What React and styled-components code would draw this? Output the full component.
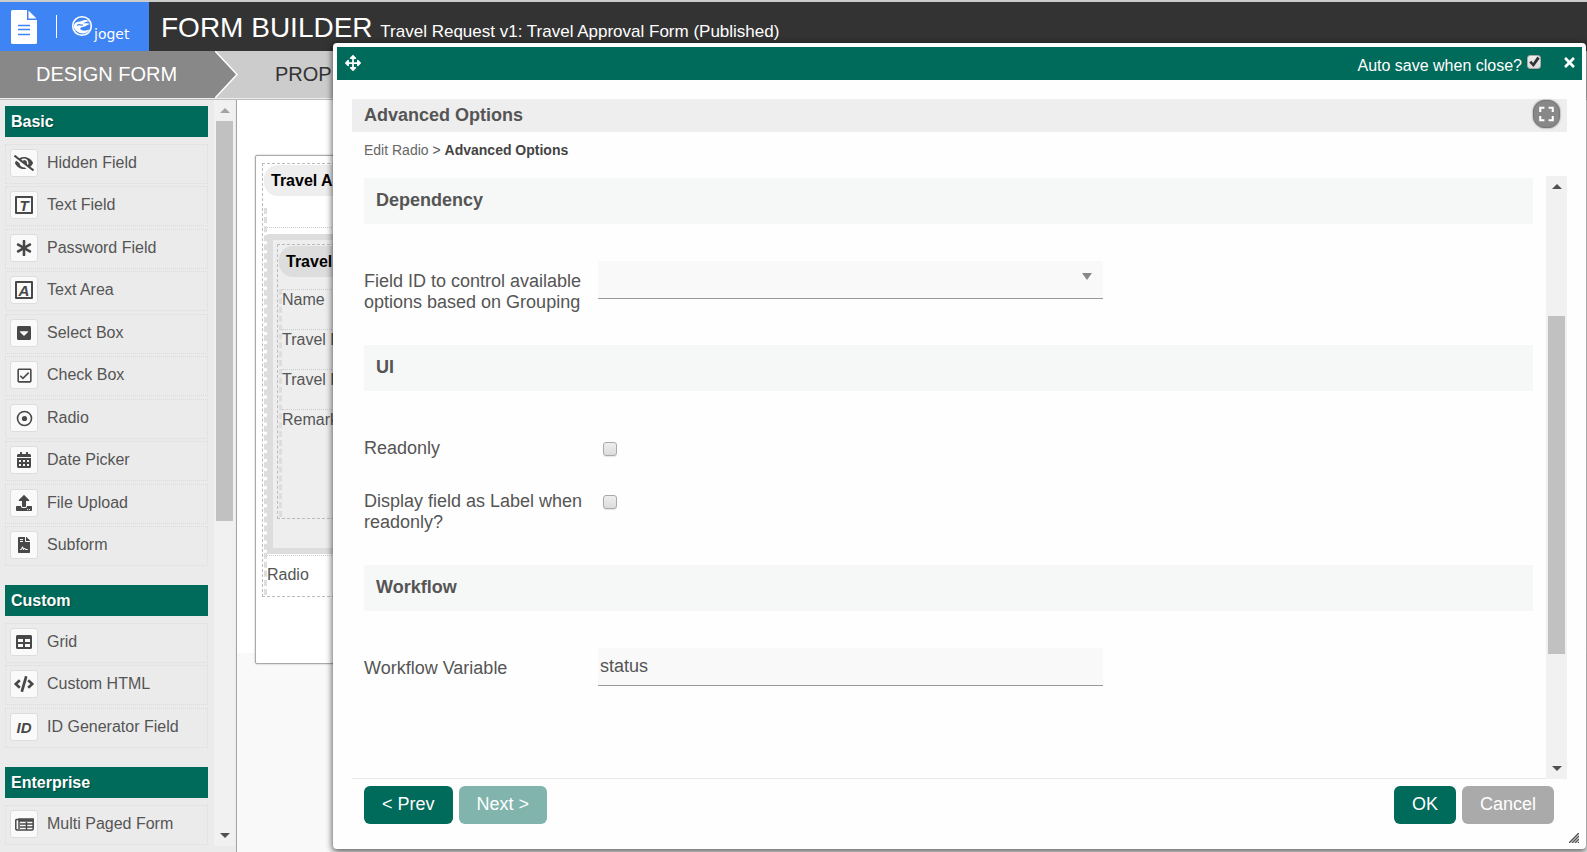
import React from "react";
import styled, { createGlobalStyle } from "styled-components";
import {
  FaArrowsAlt,
  FaAsterisk,
  FaCalendarAlt,
  FaCaretSquareDown,
  FaCode,
  FaEyeSlash,
  FaFileContract,
  FaTable,
  FaTimes,
  FaUpload,
} from "react-icons/fa";
import { MdFullscreen, MdOutlineCheckBox } from "react-icons/md";

const GREEN = "#006a5b";

const GlobalStyle = createGlobalStyle`
  * {
    box-sizing: border-box;
  }

  body {
    margin: 0;
    overflow: hidden;
    background: #f9f9f9;
    color: #555;
    font-family: "Liberation Sans", Arial, sans-serif;
    font-size: 16px;
  }

  button,
  input,
  select {
    font-family: inherit;
  }
`;

const Page = styled.div`
  position: relative;
  display: flex;
  flex-direction: column;
  height: 100vh;
  border-top: 2px solid #ccc;
`;

/* ---------- header ---------- */

const Header = styled.header`
  display: flex;
  flex: none;
  height: 49px;
  background: #333;
  color: #fff;
`;

const Brand = styled.a`
  display: flex;
  align-items: center;
  width: 149px;
  padding-left: 11px;
  background: #3f84f5;
  color: #fff;
  text-decoration: none;
`;

const BrandDivider = styled.span`
  width: 1px;
  height: 23px;
  margin: 0 14px 0 19px;
  background: #fff;
`;

const BrandName = styled.span`
  align-self: flex-end;
  padding: 0 0 9px 1px;
  font: 14px/16px "DejaVu Sans", sans-serif;
`;

const Title = styled.h1`
  margin: 0;
  padding: 9px 0 0 12px;
  font-size: 28px;
  font-weight: normal;
  line-height: 34px;
  white-space: nowrap;

  small {
    font-size: 17px;
  }
`;

const Steps = styled.nav`
  display: flex;
  flex: none;
  height: 49px;
  background: #ccc;
  border-bottom: 1px solid #bbb;
  box-shadow: inset 0 -1px 0 #eee;
`;

const Step = styled.a`
  padding: 12px 0 0 36px;
  width: ${(props) => (props.$active ? "215px" : "auto")};
  margin-bottom: 1px;
  background: ${(props) => (props.$active ? "#888" : "transparent")};
  color: ${(props) => (props.$active ? "#fff" : "#333")};
  font-size: 20px;
  line-height: 23px;
  text-decoration: none;
`;

const StepArrow = styled.svg`
  width: 24px;
  height: 47px;
`;

/* ---------- palette ---------- */

const Workspace = styled.div`
  display: flex;
  flex: 1;
  min-height: 0;
`;

const Sidebar = styled.aside`
  display: flex;
  flex: none;
  width: 237px;
  padding-right: 1px;
  background: #ebebeb;
  border-right: 1px solid #a5a5a5;
  overflow: hidden;
`;

const PaletteScroll = styled.div`
  flex: 1;
  padding: 6px 6px 0 5px;
  overflow: hidden;
`;

const Category = styled.section`
  margin-bottom: 19px;
`;

const CategoryTitle = styled.h2`
  margin: 0 0 7px;
  padding: 6px;
  background: ${GREEN};
  color: #fff;
  font-size: 16px;
  line-height: 19px;
  text-shadow: 1px 1px 1px rgba(0, 0, 0, 0.3);
`;

const PaletteList = styled.ul`
  margin: 0;
  padding: 0;
  list-style: none;
`;

const PaletteRow = styled.li`
  display: flex;
  gap: 9px;
  height: 40px;
  margin-bottom: 2px;
  padding: 4px;
  border: 1px dotted #dcdcdc;
  line-height: 27px;
  cursor: move;

  &:nth-child(even) {
    margin-bottom: 3px;
  }

  &:last-child {
    margin-bottom: 0;
  }
`;

const IconBox = styled.span`
  display: flex;
  flex: none;
  align-items: center;
  justify-content: center;
  width: 28px;
  height: 28px;
  background: #fafafa;
  border: 1px solid #ddd;
  border-radius: 3px;
  color: #484848;
  font-size: 16px;
`;

const LetterBox = styled.b`
  width: 18px;
  height: 18px;
  border: 2px solid #484848;
  border-radius: 1px;
  font-size: 15px;
  font-style: italic;
  line-height: 15px;
  text-align: center;
`;

const Letters = styled.b`
  font-size: 15px;
  font-style: italic;
`;

/* ---------- scroll bar ---------- */

const Track = styled.div`
  display: flex;
  flex: none;
  flex-direction: column;
  align-items: center;
  width: 21px;
  margin-bottom: ${(props) => props.$end || 0}px;
  background: #f1f1f1;
`;

const Thumb = styled.div`
  flex: ${(props) => props.$size};
  width: 17px;
  background: #c1c1c1;
`;

const Gap = styled.div`
  flex: ${(props) => props.$size};
`;

const Arrow = styled.span`
  display: flex;
  align-items: center;
  justify-content: center;
  height: 21px;

  &::before {
    content: "";
    border: 5px solid transparent;
    border-width: ${(props) => (props.$up ? "0 5px 5px" : "5px 5px 0")};
    border-bottom-color: ${(props) => (props.$dim ? "#a3a3a3" : "#505050")};
    border-top-color: #505050;
  }
`;

/* ---------- form canvas ---------- */

const Canvas = styled.main`
  flex: 1;
  padding: 55px 18px 0;
  background: linear-gradient(#fff 553px, #f9f9f9 553px);
`;

const FormCard = styled.div`
  height: 509px;
  padding: 7px 6px;
  background: #fff;
  border: 1px solid #aaa;
  border-radius: 2px;
  box-shadow: 0 0 2px rgba(0, 0, 0, 0.3);
`;

const FormSection = styled.section`
  padding: 1px;
  border: 1px dashed #bbb;
`;

const SectionTitle = styled.h3`
  margin: 0 0 12px;
  padding: 6px 7px;
  background: ${(props) => props.$fill};
  border-radius: 14px;
  color: #000;
  font-size: 16px;
  line-height: 19px;
`;

const Column = styled.div`
  padding-top: ${(props) => props.$top || 0}px;
  border-left: 3px dashed #ddd;
`;

const Subform = styled.div`
  height: 320px;
  margin-top: 6px;
  padding: 4px;
  background: #eee;
  border: 6px solid #ddd;
`;

const CanvasField = styled.div`
  height: ${(props) => props.$height}px;
  padding-top: ${(props) => props.$top || 0}px;
  border-top: 1px dotted #ccc;
  line-height: 20px;
  white-space: nowrap;
`;

/* ---------- dialog ---------- */

const Dialog = styled.div`
  position: absolute;
  top: 41px;
  right: 1px;
  bottom: 3px;
  left: 333px;
  display: flex;
  flex-direction: column;
  padding: 4px;
  background: #fefefe;
  border-radius: 4px;
  box-shadow: 0 2px 6px 1px rgba(0, 0, 0, 0.6);
`;

const DialogBar = styled.div`
  display: flex;
  align-items: flex-start;
  height: 33px;
  padding: 8px 5px 0 8px;
  background: ${GREEN};
  color: #fff;
`;

const AutoSave = styled.label`
  display: flex;
  gap: 5px;
  margin-left: auto;
  line-height: 22px;
`;

const CheckBox = styled.input`
  appearance: none;
  flex: none;
  width: 14px;
  height: 14px;
  margin: 0;
  background: linear-gradient(#eee, #dcdcdc);
  border: 1px solid #aaa;
  border-radius: 3px;
  box-shadow: 0 1px 1px rgba(0, 0, 0, 0.1);

  &:checked::before {
    content: "";
    display: block;
    height: 12px;
    background: #333;
    clip-path: polygon(10% 55%, 28% 40%, 42% 58%, 78% 5%, 98% 20%, 46% 92%);
  }
`;

const IconButton = styled.button`
  display: flex;
  padding: 0;
  background: none;
  border: 0;
  color: #fff;
  font-size: ${(props) => props.$size}px;
`;

const CloseButton = styled(IconButton)`
  margin-left: 21px;
`;

const Editor = styled.div`
  display: flex;
  flex: 1;
  flex-direction: column;
  min-height: 0;
  padding: 19px 15px 0;
`;

const EditorTitle = styled.div`
  display: flex;
  align-items: center;
  justify-content: space-between;
  height: 33px;
  padding: 0 7px 0 12px;
  background: #eee;

  h2 {
    margin: 0;
    font-size: 18px;
    line-height: 21px;
  }
`;

const RoundButton = styled(IconButton)`
  align-items: center;
  justify-content: center;
  width: 27px;
  height: 28px;
  margin-bottom: 4px;
  background: #888;
  border: 1px solid #777;
  border-radius: 12px;
  box-shadow: 0 0 2px #666;
`;

const Crumbs = styled.nav`
  padding: 10px 12px 18px;
  font-size: 14px;
  line-height: 16px;

  a {
    color: #666;
    text-decoration: none;
  }

  b {
    color: #444;
  }
`;

const EditorScroll = styled.div`
  display: flex;
  flex: 1;
  min-height: 0;
`;

const Properties = styled.form`
  flex: 1;
  padding: 2px 13px 0 12px;
  border-bottom: 1px solid #eaeaea;
  overflow: hidden;
`;

const Group = styled.section`
  margin-bottom: 32px;
`;

const GroupTitle = styled.h3`
  margin: 0 0 37px;
  padding: 12px 12px 13px;
  background: #f6f8f7;
  font-size: 18px;
  line-height: 21px;
`;

const PropertyRow = styled.div`
  display: grid;
  grid-template-columns: 234px 1fr;
  align-items: start;
  margin-bottom: 22px;
`;

const PropertyLabel = styled.label`
  padding: 10px 12px 0 0;
  font-size: 18px;
  line-height: 21px;
`;

const PropertyCheck = styled(CheckBox)`
  margin: 14px 5px 0;
`;

const TextInput = styled.input`
  width: 54%;
  height: 38px;
  padding: 0 2px;
  background: #f9f9f9;
  border: 0;
  border-bottom: 1px solid #999;
  border-radius: 0;
  color: #555;
  font-size: 18px;
`;

const SelectWrap = styled.div`
  position: relative;
  width: 54%;

  &::after {
    content: "";
    position: absolute;
    top: 12px;
    right: 11px;
    border: 5px solid transparent;
    border-top: 7px solid #888;
    border-bottom: 0;
  }
`;

const Select = styled(TextInput)`
  appearance: none;
  display: block;
  width: 100%;
`;

const Footer = styled.footer`
  display: flex;
  gap: 6px;
  padding: 7px 13px 21px 12px;
`;

const Button = styled.button`
  height: 38px;
  padding: 0 18px 1px;
  background: ${(props) => (props.$muted ? "#aaa" : GREEN)};
  border: 0;
  border-radius: 6px;
  color: #fff;
  font-size: 18px;

  &:disabled {
    background: #80b4ad;
  }
`;

const Spacer = styled.span`
  flex: 1;
`;

const ResizeGrip = styled.svg`
  position: absolute;
  right: 7px;
  bottom: 6px;
`;

const DocumentLogo = () => (
  <svg width="26" height="34" viewBox="0 0 26 34" fill="#fff">
    <path d="M1.500 0H16V10H26V32.500Q26 34 24.500 34H1.500Q0 34 0 32.500V1.500Q0 0 1.500 0Z" />
    <path d="M17.500 0.500L25.500 8.500H17.500Z" />
    <path d="M7 15.500h12M7 19.500h12M7 24.500h12" stroke="#3f84f5" strokeWidth="1.500" />
  </svg>
);

const SwirlLogo = () => (
  <svg width="22" height="24" viewBox="0 0 22 24" fill="none">
    <circle cx="11" cy="11" r="9.300" stroke="#fff" strokeWidth="1.600" />
    <path
      fill="#fff"
      d="M3 10C4 7 7 6.500 9.500 6.500C13 4.500 16 4.500 18 6.500C15.500 6.500 13.500 7 12.500 8.500C15 8 17.500 8 19.500 9C16.500 9.500 15 11.500 11.500 12C9 12.500 8.500 14 10.500 15C13 16.200 16 15.500 18.500 14.500C16 19 10 19.500 6 16.500C3.500 15 2.500 13 3 10Z"
    />
    <path d="M6 10.500C8.500 8.500 9.500 10.500 12 10" stroke="#3f84f5" strokeWidth="1.200" />
  </svg>
);

const RadioIcon = () => (
  <svg width="17" height="17" viewBox="0 0 17 17">
    <circle cx="8.500" cy="8.500" r="7" fill="none" stroke="#484848" strokeWidth="1.600" />
    <circle cx="8.500" cy="8.500" r="2.600" fill="#484848" />
  </svg>
);

const PagesIcon = () => (
  <svg width="19" height="13" viewBox="0 0 19 13" fill="none" stroke="#484848">
    <path d="M4 1.500H1.500Q0.800 1.500 0.800 2.200V11Q1 12 2.500 12H17Q18.200 12 18.200 10.800V1H4V11" strokeWidth="1.500" />
    <path d="M4 2.500H18" strokeWidth="2.500" />
    <path d="M5 6H18M5 9H18M11.500 4V12" strokeWidth="1.500" />
  </svg>
);

const palette = [
  {
    title: "Basic",
    items: [
      ["Hidden Field", <FaEyeSlash size={20} />],
      ["Text Field", <LetterBox>T</LetterBox>],
      ["Password Field", <FaAsterisk />],
      ["Text Area", <LetterBox>A</LetterBox>],
      ["Select Box", <FaCaretSquareDown />],
      ["Check Box", <MdOutlineCheckBox size={19} />],
      ["Radio", <RadioIcon />],
      ["Date Picker", <FaCalendarAlt />],
      ["File Upload", <FaUpload />],
      ["Subform", <FaFileContract />],
    ],
  },
  {
    title: "Custom",
    items: [
      ["Grid", <FaTable />],
      ["Custom HTML", <FaCode size={20} />],
      ["ID Generator Field", <Letters>ID</Letters>],
    ],
  },
  {
    title: "Enterprise",
    items: [["Multi Paged Form", <PagesIcon />]],
  },
];

const Palette = () => (
  <Sidebar>
    <PaletteScroll>
      {palette.map((category) => (
        <Category key={category.title}>
          <CategoryTitle>{category.title}</CategoryTitle>
          <PaletteList>
            {category.items.map(([label, icon]) => (
              <PaletteRow key={label}>
                <IconBox>{icon}</IconBox>
                {label}
              </PaletteRow>
            ))}
          </PaletteList>
        </Category>
      ))}
    </PaletteScroll>
    <Track $end={6}>
      <Arrow $up $dim />
      <Thumb $size={400} />
      <Gap $size={304} />
      <Arrow />
    </Track>
  </Sidebar>
);

const FormCanvas = () => (
  <Canvas>
    <FormCard>
      <FormSection>
        <SectionTitle $fill="#eee">Travel Approval Form</SectionTitle>
        <Column $top={19}>
          <CanvasField $height={328}>
            <Subform>
              <FormSection>
                <SectionTitle $fill="#ddd">Travel Information</SectionTitle>
                <Column>
                  <CanvasField $height={40}>Name</CanvasField>
                  <CanvasField $height={40}>Travel Date</CanvasField>
                  <CanvasField $height={40}>Travel Place</CanvasField>
                  <CanvasField $height={108}>Remarks</CanvasField>
                </Column>
              </FormSection>
            </Subform>
          </CanvasField>
          <CanvasField $height={40} $top={9}>Radio</CanvasField>
        </Column>
      </FormSection>
    </FormCard>
  </Canvas>
);

const PropertyEditor = () => {
  const [autoSave, setAutoSave] = React.useState(true);
  const [readonly, setReadonly] = React.useState(false);
  const [asLabel, setAsLabel] = React.useState(false);
  const [variable, setVariable] = React.useState("status");

  return (
    <Dialog role="dialog" aria-label="Advanced Options">
      <DialogBar>
        <FaArrowsAlt size={16} />
        <AutoSave>
          Auto save when close?
          <CheckBox
            type="checkbox"
            checked={autoSave}
            onChange={(e) => setAutoSave(e.target.checked)}
          />
        </AutoSave>
        <CloseButton type="button" aria-label="Close" $size={15}>
          <FaTimes />
        </CloseButton>
      </DialogBar>
      <Editor>
        <EditorTitle>
          <h2>Advanced Options</h2>
          <RoundButton type="button" aria-label="Full screen" $size={26}>
            <MdFullscreen />
          </RoundButton>
        </EditorTitle>
        <Crumbs>
          <a href="#radio">Edit Radio</a> &gt; <b>Advanced Options</b>
        </Crumbs>
        <EditorScroll>
          <Properties>
            <Group>
              <GroupTitle>Dependency</GroupTitle>
              <PropertyRow>
                <PropertyLabel htmlFor="controlField">
                  Field ID to control available options based on Grouping
                </PropertyLabel>
                <SelectWrap>
                  <Select as="select" id="controlField" />
                </SelectWrap>
              </PropertyRow>
            </Group>
            <Group>
              <GroupTitle>UI</GroupTitle>
              <PropertyRow>
                <PropertyLabel htmlFor="readonly">Readonly</PropertyLabel>
                <PropertyCheck
                  type="checkbox"
                  id="readonly"
                  checked={readonly}
                  onChange={(e) => setReadonly(e.target.checked)}
                />
              </PropertyRow>
              <PropertyRow>
                <PropertyLabel htmlFor="asLabel">
                  Display field as Label when readonly?
                </PropertyLabel>
                <PropertyCheck
                  type="checkbox"
                  id="asLabel"
                  checked={asLabel}
                  onChange={(e) => setAsLabel(e.target.checked)}
                />
              </PropertyRow>
            </Group>
            <Group>
              <GroupTitle>Workflow</GroupTitle>
              <PropertyRow>
                <PropertyLabel htmlFor="variable">Workflow Variable</PropertyLabel>
                <TextInput
                  id="variable"
                  value={variable}
                  onChange={(e) => setVariable(e.target.value)}
                />
              </PropertyRow>
            </Group>
          </Properties>
          <Track>
            <Arrow $up />
            <Gap $size={119} />
            <Thumb $size={338} />
            <Gap $size={104} />
            <Arrow />
          </Track>
        </EditorScroll>
        <Footer>
          <Button type="button">&lt; Prev</Button>
          <Button type="button" disabled>Next &gt;</Button>
          <Spacer />
          <Button type="button">OK</Button>
          <Button type="button" $muted>Cancel</Button>
        </Footer>
      </Editor>
      <ResizeGrip width="10" height="10" viewBox="0 0 10 10">
        <path d="M0 10L10 0M3 10L10 3M6 10L10 6M9 10L10 9" stroke="#555" strokeWidth="1.500" />
      </ResizeGrip>
    </Dialog>
  );
};

const App = () => (
  <>
    <GlobalStyle />
    <Page>
      <Header>
        <Brand href="#home">
          <DocumentLogo />
          <BrandDivider />
          <SwirlLogo />
          <BrandName>joget</BrandName>
        </Brand>
        <Title>
          FORM BUILDER{" "}
          <small>Travel Request v1: Travel Approval Form (Published)</small>
        </Title>
      </Header>
      <Steps>
        <Step href="#design" $active>DESIGN FORM</Step>
        <StepArrow viewBox="0 0 24 47">
          <path d="M0 0L22 23.500L0 47Z" fill="#888" />
          <path d="M0 0L22 23.500L0 47" fill="none" stroke="#fff" strokeWidth="1.500" />
        </StepArrow>
        <Step href="#properties">PROPERTIES</Step>
      </Steps>
      <Workspace>
        <Palette />
        <FormCanvas />
      </Workspace>
      <PropertyEditor />
    </Page>
  </>
);

export default App;
